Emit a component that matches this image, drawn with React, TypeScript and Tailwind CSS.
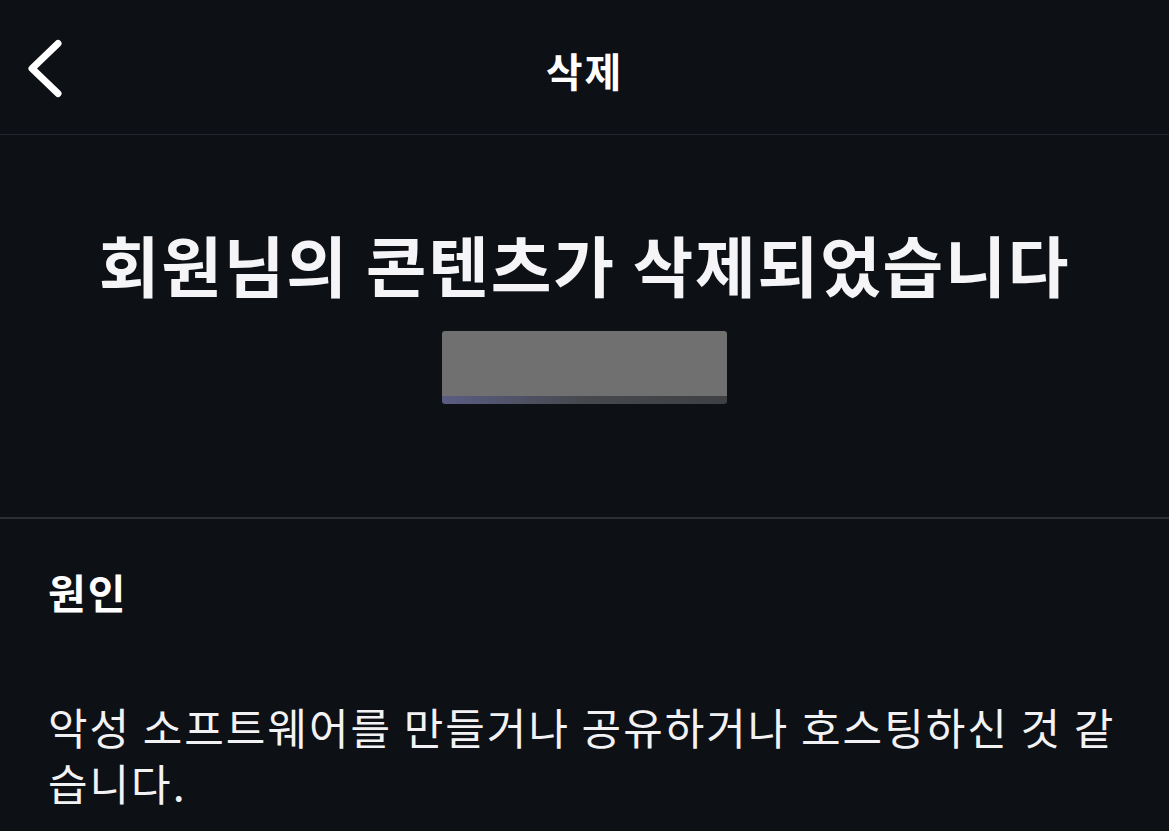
const font = { fontFamily: '"Noto Sans CJK KR", "Noto Sans", sans-serif' };

function BackIcon() {
    return (
        <svg width="40" height="64" viewBox="0 0 40 64" fill="none">
            <polyline points="33,6.5 7,31.5 33,56.5" stroke="white" strokeWidth="7" strokeLinecap="round" strokeLinejoin="round" />
        </svg>
    );
}

function Header() {
    return (
        <div className="relative flex items-center justify-center h-[135px] pt-[5px] border-b border-[#22252b]">
            <button type="button" className="absolute left-[25px] top-[37px]">
                <BackIcon />
            </button>
            <h1 className="text-[40px] font-bold text-white leading-none tracking-[2px]">삭제</h1>
        </div>
    );
}

function Hero() {
    return (
        <div className="flex flex-col items-center h-[384px] pt-[95px] border-b-2 border-[#2c2e33]">
            <h2 className="text-[66px] font-bold text-[#f5f5f7] leading-none tracking-[1.8px]">
                회원님의 콘텐츠가 삭제되었습니다
            </h2>
            <div className="mt-[35px] w-[285px] h-[73px] rounded-[3px] overflow-hidden flex flex-col">
                <div className="flex-1 bg-[#707070]" />
                <div className="h-[8px] bg-gradient-to-r from-[#5a5d82] via-[#47484d] to-[#3f4044]" />
            </div>
        </div>
    );
}

export default function App() {
    return (
        <div className="w-full min-h-screen bg-[#0d1015] text-white" style={font}>
            <Header />
            <Hero />
            <div className="pl-[48px] pr-[40px] pt-[52px]">
                <h3 className="text-[41px] font-bold leading-none tracking-[2px]">원인</h3>
                <p className="mt-[86px] text-[43px] font-normal leading-[56px] tracking-[2px] text-[#f2f2f4]">
                    악성 소프트웨어를 만들거나 공유하거나 호스팅하신 것 같습니다.
                </p>
            </div>
        </div>
    );
}
